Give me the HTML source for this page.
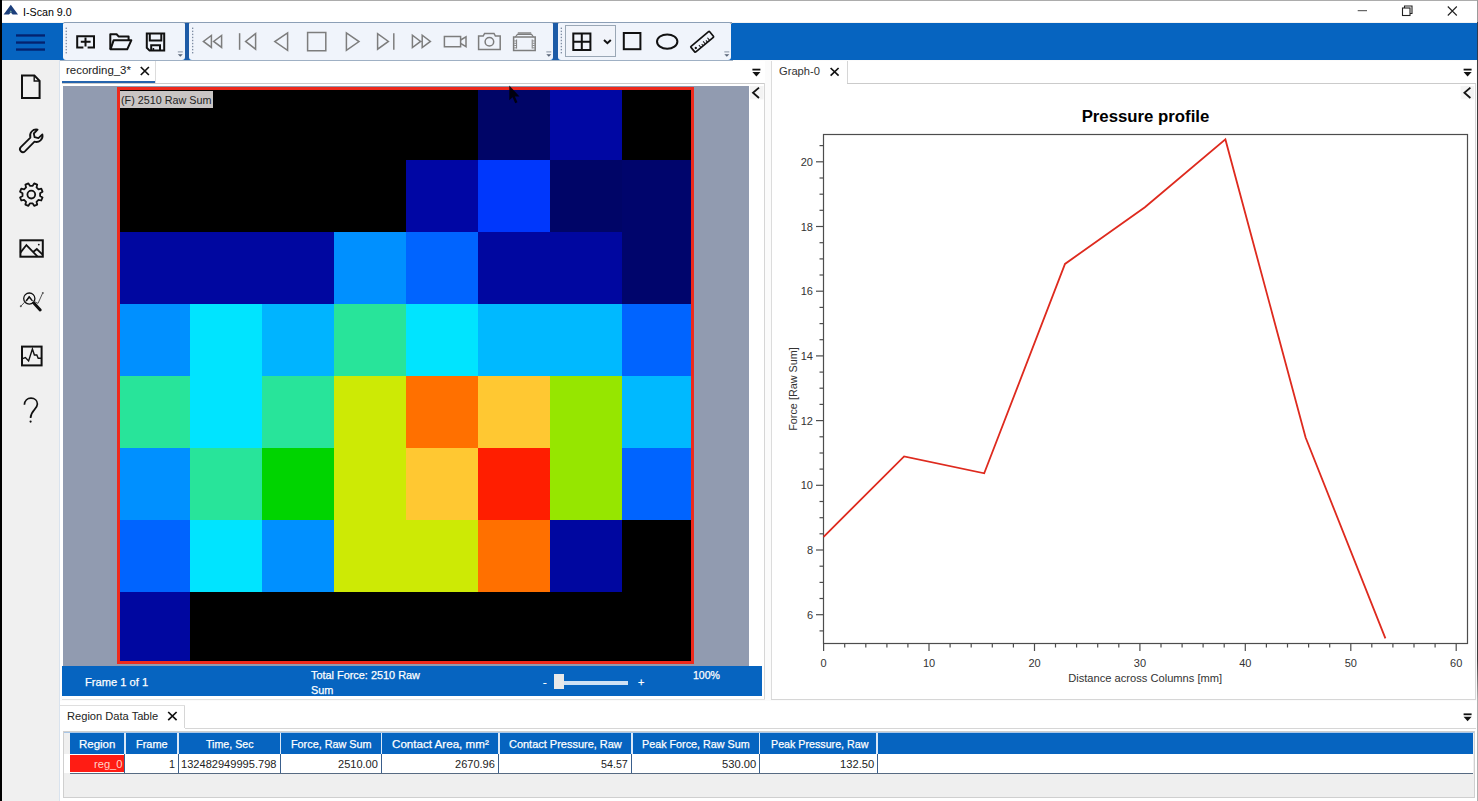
<!DOCTYPE html>
<html><head><meta charset="utf-8"><title>I-Scan 9.0</title>
<style>
html,body{margin:0;padding:0;}
body{width:1478px;height:801px;overflow:hidden;position:relative;background:#f3f3f3;font-family:"Liberation Sans",sans-serif;font-size:11.6px;color:#1a1a1a;}
.a{position:absolute;}
.t{position:absolute;white-space:nowrap;line-height:14px;transform:scaleX(.943);transform-origin:0 50%;}
.tr{transform-origin:100% 50%;text-align:right;}
.tc{transform-origin:50% 50%;text-align:center;}
.w{color:#fff;-webkit-text-stroke:0.25px #fff;}
svg{position:absolute;left:0;top:0;overflow:visible;}
.tk{font-family:"Liberation Sans",sans-serif;font-size:11px;fill:#333;}
.pan{position:absolute;top:22.4px;height:37.4px;background:#f0f4fb;border-radius:2px 2px 3px 3px;border-top:1.4px solid #8c9fb6;box-sizing:border-box;}
.hd{position:absolute;top:733px;height:21px;background:#0664c0;}
.hl{position:absolute;top:733px;height:21px;width:1.8px;background:#dbe8f7;}
.cl{position:absolute;top:754px;height:19px;width:1px;background:#3a5f8c;}
</style></head><body>

<!-- title bar -->
<div class="a" style="left:0;top:0;width:1478px;height:22px;background:#fff;"></div>
<div class="a" style="left:0;top:0;width:1478px;height:1.4px;background:#acacac;"></div>
<div class="t" style="left:22.6px;top:4.5px;color:#000;transform:scaleX(0.921)">I-Scan 9.0</div>

<!-- blue band -->
<div class="a" style="left:0;top:22.6px;width:1478px;height:37.8px;background:#0664c0;"></div>
<div class="a" style="left:64px;top:22.4px;width:668px;height:1.4px;background:#8c9fb6;"></div>
<div class="pan" style="left:63px;width:122px;"></div>
<div class="pan" style="left:189px;width:364px;"></div>
<div class="pan" style="left:558px;width:173px;"></div>
<div class="a" style="left:185px;top:23px;width:4px;height:37px;background:#1d5ba6;"></div>
<div class="a" style="left:553px;top:23px;width:5px;height:37px;background:#1d5ba6;"></div>
<div class="a" style="left:565px;top:25px;width:51px;height:32px;border:1px solid #9aa7b5;box-sizing:border-box;background:#f1f4fa;"></div>

<!-- sidebar -->
<div class="a" style="left:0;top:60px;width:59px;height:741px;background:#f0f0f0;"></div>
<div class="a" style="left:59px;top:60px;width:1px;height:741px;background:#d9e3ee;"></div>
<div class="a" style="left:60px;top:60px;width:1418px;height:741px;background:#fbfbfb;"></div>

<!-- left doc panel -->
<div class="a" style="left:60px;top:61px;width:705px;height:639px;background:#fff;"></div>
<div class="a" style="left:60px;top:60px;width:673px;height:1.4px;background:#9fb0c4;"></div>
<div class="a" style="left:62px;top:82.8px;width:703px;height:1.2px;background:#cbcbcb;"></div>
<div class="a" style="left:764px;top:83px;width:1px;height:617px;background:#d6d6d6;"></div>
<div class="a" style="left:62px;top:81px;width:93px;height:2px;background:#2463ac;"></div>
<div class="a" style="left:155px;top:61px;width:1px;height:22px;background:#dcdcdc;"></div>
<div class="t" style="left:66px;top:63px;transform:scaleX(0.988)">recording_3*</div>

<!-- heatmap area -->
<div class="a" style="left:63px;top:86px;width:686px;height:580px;background:#919bb0;"></div>
<div class="a" style="left:118px;top:88px;width:576px;height:576px;background:#000;"></div>
<svg width="1478" height="801" style="left:118px;top:88px;" shape-rendering="crispEdges"><rect x="360" y="0" width="72" height="72" fill="#000567"/><rect x="432" y="0" width="72" height="72" fill="#0007a3"/><rect x="288" y="72" width="72" height="72" fill="#0006a4"/><rect x="360" y="72" width="72" height="72" fill="#0037fc"/><rect x="432" y="72" width="72" height="72" fill="#000567"/><rect x="504" y="72" width="72" height="72" fill="#00056c"/><rect x="0" y="144" width="72" height="72" fill="#0007a0"/><rect x="72" y="144" width="72" height="72" fill="#0007a0"/><rect x="144" y="144" width="72" height="72" fill="#0007a0"/><rect x="216" y="144" width="72" height="72" fill="#0090ff"/><rect x="288" y="144" width="72" height="72" fill="#0064ff"/><rect x="360" y="144" width="72" height="72" fill="#0007a0"/><rect x="432" y="144" width="72" height="72" fill="#0007a0"/><rect x="504" y="144" width="72" height="72" fill="#00056c"/><rect x="0" y="216" width="72" height="72" fill="#0090ff"/><rect x="72" y="216" width="72" height="72" fill="#00e4ff"/><rect x="144" y="216" width="72" height="72" fill="#00b4ff"/><rect x="216" y="216" width="72" height="72" fill="#28e49a"/><rect x="288" y="216" width="72" height="72" fill="#00e4ff"/><rect x="360" y="216" width="72" height="72" fill="#00b9ff"/><rect x="432" y="216" width="72" height="72" fill="#00b9ff"/><rect x="504" y="216" width="72" height="72" fill="#0064ff"/><rect x="0" y="288" width="72" height="72" fill="#28e49a"/><rect x="72" y="288" width="72" height="72" fill="#00e4ff"/><rect x="144" y="288" width="72" height="72" fill="#28e49a"/><rect x="216" y="288" width="72" height="72" fill="#cdea05"/><rect x="288" y="288" width="72" height="72" fill="#ff7000"/><rect x="360" y="288" width="72" height="72" fill="#ffc832"/><rect x="432" y="288" width="72" height="72" fill="#96e600"/><rect x="504" y="288" width="72" height="72" fill="#00b9ff"/><rect x="0" y="360" width="72" height="72" fill="#0090ff"/><rect x="72" y="360" width="72" height="72" fill="#28e49a"/><rect x="144" y="360" width="72" height="72" fill="#00d400"/><rect x="216" y="360" width="72" height="72" fill="#cdea05"/><rect x="288" y="360" width="72" height="72" fill="#ffc832"/><rect x="360" y="360" width="72" height="72" fill="#ff1e00"/><rect x="432" y="360" width="72" height="72" fill="#96e600"/><rect x="504" y="360" width="72" height="72" fill="#0064ff"/><rect x="0" y="432" width="72" height="72" fill="#0064ff"/><rect x="72" y="432" width="72" height="72" fill="#00e4ff"/><rect x="144" y="432" width="72" height="72" fill="#0090ff"/><rect x="216" y="432" width="72" height="72" fill="#cdea05"/><rect x="288" y="432" width="72" height="72" fill="#cdea05"/><rect x="360" y="432" width="72" height="72" fill="#ff7000"/><rect x="432" y="432" width="72" height="72" fill="#0007a0"/><rect x="0" y="504" width="72" height="72" fill="#0007a0"/></svg>
<div class="a" style="left:117px;top:87.4px;width:577px;height:577px;border:solid #ee2a1c;border-width:3.2px 3.6px 3.8px 3px;box-sizing:border-box;"></div>
<div class="a" style="left:120px;top:91px;width:93px;height:16.8px;background:#c9c5c4;"></div>
<div class="t" style="left:121.4px;top:93.3px;color:#222;transform:scaleX(0.929)">(F) 2510 Raw Sum</div>

<!-- status bar -->
<div class="a" style="left:62px;top:665.8px;width:700.4px;height:30.5px;background:#0664c0;"></div>
<div class="t w" style="left:84.8px;top:675.3px;transform:scaleX(0.962)">Frame 1 of 1</div>
<div class="t w" style="left:311.2px;top:667.7px;transform:scaleX(0.939)">Total Force: 2510 Raw</div>
<div class="t w" style="left:311.2px;top:682.6px;transform:scaleX(0.939)">Sum</div>
<div class="t w" style="left:692.8px;top:667.5px;transform:scaleX(0.910)">100%</div>
<div class="t w" style="left:543px;top:675px;">-</div>
<div class="t w" style="left:637.5px;top:675px;">+</div>
<div class="a" style="left:562px;top:681px;width:66px;height:4px;background:#cfe1f4;"></div>
<div class="a" style="left:554px;top:674px;width:10px;height:15px;background:#e9e9e9;"></div>

<!-- right graph panel -->
<div class="a" style="left:771px;top:61px;width:705px;height:639px;background:#fff;"></div>
<div class="a" style="left:771px;top:61px;width:1px;height:639px;background:#dcdcdc;"></div>
<div class="a" style="left:1475px;top:83px;width:1px;height:617px;background:#d6d6d6;"></div>
<div class="a" style="left:771px;top:699px;width:705px;height:1px;background:#d6d6d6;"></div>
<div class="a" style="left:62px;top:699px;width:703px;height:1px;background:#e2e2e2;"></div>
<div class="a" style="left:847px;top:82.8px;width:629px;height:1.2px;background:#cbcbcb;"></div>
<div class="a" style="left:847px;top:61px;width:1px;height:22px;background:#d6d6d6;"></div>
<div class="t" style="left:779px;top:64.4px;color:#333;transform:scaleX(0.962)">Graph-0</div>

<!-- bottom panel -->
<div class="a" style="left:60px;top:701px;width:1418px;height:100px;background:#fff;"></div>
<div class="a" style="left:60px;top:728px;width:1418px;height:73px;background:#fff;"></div>
<div class="a" style="left:185px;top:728px;width:1291px;height:1px;background:#d6d6d6;"></div>
<div class="a" style="left:184px;top:706px;width:1px;height:22px;background:#d6d6d6;"></div>
<div class="a" style="left:60px;top:705px;width:125px;height:1px;background:#dfdfdf;"></div>
<div class="t" style="left:67.1px;top:709px;color:#222;transform:scaleX(0.958)">Region Data Table</div>

<!-- table -->
<div class="a" style="left:63px;top:731px;width:1412px;height:67px;background:#efefef;border:1px solid #cfcfcf;box-sizing:border-box;"></div>
<div class="a" style="left:64px;top:732px;width:1410px;height:1px;background:#a9c7e8;"></div>
<div class="hd" style="left:70.3px;width:1403px;"></div>
<div class="a" style="left:64px;top:754px;width:1409.4px;height:19px;background:#fff;"></div>
<div class="a" style="left:70px;top:772.8px;width:1403.4px;height:1.1px;background:#566a82;"></div>
<div class="a" style="left:70px;top:755px;width:55px;height:17px;background:#ff1c14;"></div>
<div class="hl" style="left:124.0px;"></div><div class="cl" style="left:124.4px;"></div><div class="hl" style="left:177.4px;"></div><div class="cl" style="left:177.8px;"></div><div class="hl" style="left:279.70000000000005px;"></div><div class="cl" style="left:280.1px;"></div><div class="hl" style="left:380.6px;"></div><div class="cl" style="left:381.0px;"></div><div class="hl" style="left:497.90000000000003px;"></div><div class="cl" style="left:498.3px;"></div><div class="hl" style="left:630.9px;"></div><div class="cl" style="left:631.3px;"></div><div class="hl" style="left:758.7px;"></div><div class="cl" style="left:759.1px;"></div><div class="hl" style="left:876.1px;"></div><div class="cl" style="left:876.5px;"></div><div class="t w" style="left:79.2px;top:736.7px;transform:scaleX(0.990)">Region</div><div class="t w" style="left:136.2px;top:736.7px;transform:scaleX(0.943)">Frame</div><div class="t w" style="left:205.7px;top:736.7px;transform:scaleX(0.917)">Time, Sec</div><div class="t w" style="left:290.8px;top:736.7px;transform:scaleX(0.933)">Force, Raw Sum</div><div class="t w" style="left:392.1px;top:736.7px;transform:scaleX(1.001)">Contact Area, mm²</div><div class="t w" style="left:508.8px;top:736.7px;transform:scaleX(0.946)">Contact Pressure, Raw</div><div class="t w" style="left:641.8px;top:736.7px;transform:scaleX(0.928)">Peak Force, Raw Sum</div><div class="t w" style="left:770.5px;top:736.7px;transform:scaleX(0.922)">Peak Pressure, Raw</div><div class="t" style="left:93.5px;top:757.3px;color:#ffd2c8;transform:scaleX(0.961)">reg_0</div><div class="t" style="left:168.9px;top:757.3px;color:#222;transform:scaleX(0.930)">1</div><div class="t" style="left:181.0px;top:757.3px;color:#222;transform:scaleX(0.955)">132482949995.798</div><div class="t" style="left:338.3px;top:757.3px;color:#222;transform:scaleX(0.952)">2510.00</div><div class="t" style="left:455.1px;top:757.3px;color:#222;transform:scaleX(0.952)">2670.96</div><div class="t" style="left:600.7px;top:757.3px;color:#222;transform:scaleX(0.923)">54.57</div><div class="t" style="left:722.0px;top:757.3px;color:#222;transform:scaleX(0.964)">530.00</div><div class="t" style="left:840.1px;top:757.3px;color:#222;transform:scaleX(0.964)">132.50</div>
<!-- chart -->
<svg width="1478" height="801"><rect x="823.5" y="134.5" width="644" height="509" fill="#fff" stroke="#4d4d4d" stroke-width="1.2"/><line x1="819.5" y1="630.9" x2="823.5" y2="630.9" stroke="#4d4d4d" stroke-width="1.2"/><line x1="816.0" y1="614.7" x2="823.5" y2="614.7" stroke="#4d4d4d" stroke-width="1.2"/><text x="813" y="618.7" text-anchor="end" class="tk">6</text><line x1="819.5" y1="598.5" x2="823.5" y2="598.5" stroke="#4d4d4d" stroke-width="1.2"/><line x1="819.5" y1="582.4" x2="823.5" y2="582.4" stroke="#4d4d4d" stroke-width="1.2"/><line x1="819.5" y1="566.2" x2="823.5" y2="566.2" stroke="#4d4d4d" stroke-width="1.2"/><line x1="816.0" y1="550.0" x2="823.5" y2="550.0" stroke="#4d4d4d" stroke-width="1.2"/><text x="813" y="554.0" text-anchor="end" class="tk">8</text><line x1="819.5" y1="533.8" x2="823.5" y2="533.8" stroke="#4d4d4d" stroke-width="1.2"/><line x1="819.5" y1="517.7" x2="823.5" y2="517.7" stroke="#4d4d4d" stroke-width="1.2"/><line x1="819.5" y1="501.5" x2="823.5" y2="501.5" stroke="#4d4d4d" stroke-width="1.2"/><line x1="816.0" y1="485.3" x2="823.5" y2="485.3" stroke="#4d4d4d" stroke-width="1.2"/><text x="813" y="489.3" text-anchor="end" class="tk">10</text><line x1="819.5" y1="469.1" x2="823.5" y2="469.1" stroke="#4d4d4d" stroke-width="1.2"/><line x1="819.5" y1="453.0" x2="823.5" y2="453.0" stroke="#4d4d4d" stroke-width="1.2"/><line x1="819.5" y1="436.8" x2="823.5" y2="436.8" stroke="#4d4d4d" stroke-width="1.2"/><line x1="816.0" y1="420.6" x2="823.5" y2="420.6" stroke="#4d4d4d" stroke-width="1.2"/><text x="813" y="424.6" text-anchor="end" class="tk">12</text><line x1="819.5" y1="404.4" x2="823.5" y2="404.4" stroke="#4d4d4d" stroke-width="1.2"/><line x1="819.5" y1="388.2" x2="823.5" y2="388.2" stroke="#4d4d4d" stroke-width="1.2"/><line x1="819.5" y1="372.1" x2="823.5" y2="372.1" stroke="#4d4d4d" stroke-width="1.2"/><line x1="816.0" y1="355.9" x2="823.5" y2="355.9" stroke="#4d4d4d" stroke-width="1.2"/><text x="813" y="359.9" text-anchor="end" class="tk">14</text><line x1="819.5" y1="339.7" x2="823.5" y2="339.7" stroke="#4d4d4d" stroke-width="1.2"/><line x1="819.5" y1="323.6" x2="823.5" y2="323.6" stroke="#4d4d4d" stroke-width="1.2"/><line x1="819.5" y1="307.4" x2="823.5" y2="307.4" stroke="#4d4d4d" stroke-width="1.2"/><line x1="816.0" y1="291.2" x2="823.5" y2="291.2" stroke="#4d4d4d" stroke-width="1.2"/><text x="813" y="295.2" text-anchor="end" class="tk">16</text><line x1="819.5" y1="275.0" x2="823.5" y2="275.0" stroke="#4d4d4d" stroke-width="1.2"/><line x1="819.5" y1="258.9" x2="823.5" y2="258.9" stroke="#4d4d4d" stroke-width="1.2"/><line x1="819.5" y1="242.7" x2="823.5" y2="242.7" stroke="#4d4d4d" stroke-width="1.2"/><line x1="816.0" y1="226.5" x2="823.5" y2="226.5" stroke="#4d4d4d" stroke-width="1.2"/><text x="813" y="230.5" text-anchor="end" class="tk">18</text><line x1="819.5" y1="210.3" x2="823.5" y2="210.3" stroke="#4d4d4d" stroke-width="1.2"/><line x1="819.5" y1="194.2" x2="823.5" y2="194.2" stroke="#4d4d4d" stroke-width="1.2"/><line x1="819.5" y1="178.0" x2="823.5" y2="178.0" stroke="#4d4d4d" stroke-width="1.2"/><line x1="816.0" y1="161.8" x2="823.5" y2="161.8" stroke="#4d4d4d" stroke-width="1.2"/><text x="813" y="165.8" text-anchor="end" class="tk">20</text><line x1="819.5" y1="145.6" x2="823.5" y2="145.6" stroke="#4d4d4d" stroke-width="1.2"/><line x1="823.6" y1="643.5" x2="823.6" y2="651.0" stroke="#4d4d4d" stroke-width="1.2"/><text x="823.6" y="667" text-anchor="middle" class="tk">0</text><line x1="844.7" y1="643.5" x2="844.7" y2="647.5" stroke="#4d4d4d" stroke-width="1.2"/><line x1="865.8" y1="643.5" x2="865.8" y2="647.5" stroke="#4d4d4d" stroke-width="1.2"/><line x1="886.9" y1="643.5" x2="886.9" y2="647.5" stroke="#4d4d4d" stroke-width="1.2"/><line x1="907.9" y1="643.5" x2="907.9" y2="647.5" stroke="#4d4d4d" stroke-width="1.2"/><line x1="929.0" y1="643.5" x2="929.0" y2="651.0" stroke="#4d4d4d" stroke-width="1.2"/><text x="929.0" y="667" text-anchor="middle" class="tk">10</text><line x1="950.1" y1="643.5" x2="950.1" y2="647.5" stroke="#4d4d4d" stroke-width="1.2"/><line x1="971.2" y1="643.5" x2="971.2" y2="647.5" stroke="#4d4d4d" stroke-width="1.2"/><line x1="992.3" y1="643.5" x2="992.3" y2="647.5" stroke="#4d4d4d" stroke-width="1.2"/><line x1="1013.4" y1="643.5" x2="1013.4" y2="647.5" stroke="#4d4d4d" stroke-width="1.2"/><line x1="1034.5" y1="643.5" x2="1034.5" y2="651.0" stroke="#4d4d4d" stroke-width="1.2"/><text x="1034.5" y="667" text-anchor="middle" class="tk">20</text><line x1="1055.5" y1="643.5" x2="1055.5" y2="647.5" stroke="#4d4d4d" stroke-width="1.2"/><line x1="1076.6" y1="643.5" x2="1076.6" y2="647.5" stroke="#4d4d4d" stroke-width="1.2"/><line x1="1097.7" y1="643.5" x2="1097.7" y2="647.5" stroke="#4d4d4d" stroke-width="1.2"/><line x1="1118.8" y1="643.5" x2="1118.8" y2="647.5" stroke="#4d4d4d" stroke-width="1.2"/><line x1="1139.9" y1="643.5" x2="1139.9" y2="651.0" stroke="#4d4d4d" stroke-width="1.2"/><text x="1139.9" y="667" text-anchor="middle" class="tk">30</text><line x1="1161.0" y1="643.5" x2="1161.0" y2="647.5" stroke="#4d4d4d" stroke-width="1.2"/><line x1="1182.1" y1="643.5" x2="1182.1" y2="647.5" stroke="#4d4d4d" stroke-width="1.2"/><line x1="1203.1" y1="643.5" x2="1203.1" y2="647.5" stroke="#4d4d4d" stroke-width="1.2"/><line x1="1224.2" y1="643.5" x2="1224.2" y2="647.5" stroke="#4d4d4d" stroke-width="1.2"/><line x1="1245.3" y1="643.5" x2="1245.3" y2="651.0" stroke="#4d4d4d" stroke-width="1.2"/><text x="1245.3" y="667" text-anchor="middle" class="tk">40</text><line x1="1266.4" y1="643.5" x2="1266.4" y2="647.5" stroke="#4d4d4d" stroke-width="1.2"/><line x1="1287.5" y1="643.5" x2="1287.5" y2="647.5" stroke="#4d4d4d" stroke-width="1.2"/><line x1="1308.6" y1="643.5" x2="1308.6" y2="647.5" stroke="#4d4d4d" stroke-width="1.2"/><line x1="1329.7" y1="643.5" x2="1329.7" y2="647.5" stroke="#4d4d4d" stroke-width="1.2"/><line x1="1350.8" y1="643.5" x2="1350.8" y2="651.0" stroke="#4d4d4d" stroke-width="1.2"/><text x="1350.8" y="667" text-anchor="middle" class="tk">50</text><line x1="1371.8" y1="643.5" x2="1371.8" y2="647.5" stroke="#4d4d4d" stroke-width="1.2"/><line x1="1392.9" y1="643.5" x2="1392.9" y2="647.5" stroke="#4d4d4d" stroke-width="1.2"/><line x1="1414.0" y1="643.5" x2="1414.0" y2="647.5" stroke="#4d4d4d" stroke-width="1.2"/><line x1="1435.1" y1="643.5" x2="1435.1" y2="647.5" stroke="#4d4d4d" stroke-width="1.2"/><line x1="1456.2" y1="643.5" x2="1456.2" y2="651.0" stroke="#4d4d4d" stroke-width="1.2"/><text x="1456.2" y="667" text-anchor="middle" class="tk">60</text><polyline fill="none" stroke="#de2a1e" stroke-width="1.8" stroke-linejoin="miter" points="823.6,536.8 904.1,456.4 984.2,473.3 1065,263.9 1144.9,207.3 1225.4,139.4 1305.6,437.5 1385.4,638.4"/>
<text x="1145.5" y="122.3" text-anchor="middle" style="font-family:'Liberation Sans',sans-serif;font-weight:700;font-size:15.6px;fill:#000" textLength="127.7" lengthAdjust="spacingAndGlyphs">Pressure profile</text>
<text x="1145.2" y="682.3" text-anchor="middle" style="font-family:'Liberation Sans',sans-serif;font-size:11px;fill:#333" textLength="154" lengthAdjust="spacingAndGlyphs">Distance across Columns [mm]</text>
<text transform="translate(797.3,389) rotate(-90)" text-anchor="middle" style="font-family:'Liberation Sans',sans-serif;font-size:11px;fill:#333" textLength="83.5" lengthAdjust="spacingAndGlyphs">Force [Raw Sum]</text>
</svg>

<svg width="1478" height="801"><path d="M10.8,4.8 L18,14.5 L12.6,14.5 L10.8,12.4 L9,14.5 L3.6,14.5 Z" fill="#1c3f7c"/><path d="M10.8,10.2 L12.2,12.8 L10.8,12 L9.4,12.8 Z" fill="#6fa596"/><rect x="16" y="34.3" width="29" height="2.3" fill="#04226e"/><rect x="16" y="41.4" width="29" height="2.3" fill="#04226e"/><rect x="16" y="48.4" width="29" height="2.3" fill="#04226e"/><path d="M1357.7,10.7 H1367" stroke="#444" stroke-width="1" fill="none"/><rect x="1402.5" y="8" width="7.5" height="7.5" fill="none" stroke="#222" stroke-width="1.1"/><path d="M1404.5,8 V6 H1412 V13.5 H1410" fill="none" stroke="#222" stroke-width="1.1"/><path d="M1447.8,6.5 L1456.8,15.5 M1456.8,6.5 L1447.8,15.5" stroke="#222" stroke-width="1.1" fill="none"/><rect x="65.60000000000001" y="27.60" width="1.3" height="1.4" fill="#7f8da3"/><rect x="65.60000000000001" y="30.65" width="1.3" height="1.4" fill="#7f8da3"/><rect x="65.60000000000001" y="33.70" width="1.3" height="1.4" fill="#7f8da3"/><rect x="65.60000000000001" y="36.75" width="1.3" height="1.4" fill="#7f8da3"/><rect x="65.60000000000001" y="39.80" width="1.3" height="1.4" fill="#7f8da3"/><rect x="65.60000000000001" y="42.85" width="1.3" height="1.4" fill="#7f8da3"/><rect x="65.60000000000001" y="45.90" width="1.3" height="1.4" fill="#7f8da3"/><rect x="65.60000000000001" y="48.95" width="1.3" height="1.4" fill="#7f8da3"/><rect x="65.60000000000001" y="52.00" width="1.3" height="1.4" fill="#7f8da3"/><rect x="192.0" y="27.60" width="1.3" height="1.4" fill="#7f8da3"/><rect x="192.0" y="30.65" width="1.3" height="1.4" fill="#7f8da3"/><rect x="192.0" y="33.70" width="1.3" height="1.4" fill="#7f8da3"/><rect x="192.0" y="36.75" width="1.3" height="1.4" fill="#7f8da3"/><rect x="192.0" y="39.80" width="1.3" height="1.4" fill="#7f8da3"/><rect x="192.0" y="42.85" width="1.3" height="1.4" fill="#7f8da3"/><rect x="192.0" y="45.90" width="1.3" height="1.4" fill="#7f8da3"/><rect x="192.0" y="48.95" width="1.3" height="1.4" fill="#7f8da3"/><rect x="192.0" y="52.00" width="1.3" height="1.4" fill="#7f8da3"/><rect x="560.6999999999999" y="27.60" width="1.3" height="1.4" fill="#7f8da3"/><rect x="560.6999999999999" y="30.65" width="1.3" height="1.4" fill="#7f8da3"/><rect x="560.6999999999999" y="33.70" width="1.3" height="1.4" fill="#7f8da3"/><rect x="560.6999999999999" y="36.75" width="1.3" height="1.4" fill="#7f8da3"/><rect x="560.6999999999999" y="39.80" width="1.3" height="1.4" fill="#7f8da3"/><rect x="560.6999999999999" y="42.85" width="1.3" height="1.4" fill="#7f8da3"/><rect x="560.6999999999999" y="45.90" width="1.3" height="1.4" fill="#7f8da3"/><rect x="560.6999999999999" y="48.95" width="1.3" height="1.4" fill="#7f8da3"/><rect x="560.6999999999999" y="52.00" width="1.3" height="1.4" fill="#7f8da3"/><rect x="177.8" y="51.4" width="5" height="1" fill="#8792a2"/><path d="M177.8,54.2 h5 l-2.5,2.6z" fill="#596577"/><rect x="546.3" y="51.4" width="5" height="1" fill="#8792a2"/><path d="M546.3,54.2 h5 l-2.5,2.6z" fill="#596577"/><rect x="724.3" y="51.4" width="5" height="1" fill="#8792a2"/><path d="M724.3,54.2 h5 l-2.5,2.6z" fill="#596577"/><path d="M83.4,47.5 H77.2 V36.2 H94 V47.5 H87.6" fill="none" stroke="#111" stroke-width="2"/><path d="M80.8,41.8 H90.6 M85.5,37.4 V46.4" fill="none" stroke="#111" stroke-width="2"/><path d="M110.3,49.2 V34.3 H116.6 L118.8,36.6 H128.6 V40" fill="none" stroke="#111" stroke-width="2" stroke-linejoin="round"/><path d="M110.5,49.3 L113.6,40.3 H131.3 L127.2,49.3 Z" fill="none" stroke="#111" stroke-width="2" stroke-linejoin="round"/><path d="M146.8,33.6 H164.2 V50.6 H149.6 L146.8,47.8 Z" fill="none" stroke="#111" stroke-width="2" stroke-linejoin="miter"/><path d="M149.8,33.6 V40.4 H161.3 V33.6" fill="none" stroke="#111" stroke-width="2"/><path d="M151.2,50.6 V45.3 H160 V50.6" fill="none" stroke="#111" stroke-width="2"/><path d="M153.4,50.6 V48" fill="none" stroke="#111" stroke-width="1.6"/><path d="M211.4,35.4 V47.4 L203.4,41.4 Z M221.6,35.4 V47.4 L213.6,41.4 Z" fill="none" stroke="#7d7d7d" stroke-width="1.5" stroke-linejoin="miter"/><path d="M239.6,33.2 V49.8" fill="none" stroke="#7d7d7d" stroke-width="1.5" stroke-linejoin="miter"/><path d="M255.6,33.6 V49.2 L245.6,41.4 Z" fill="none" stroke="#7d7d7d" stroke-width="1.5" stroke-linejoin="miter"/><path d="M287.6,33 V50.4 L274.8,41.6 Z" fill="none" stroke="#7d7d7d" stroke-width="1.5" stroke-linejoin="miter"/><path d="M307.6,32.6 H325.8 V50.8 H307.6 Z" fill="none" stroke="#7d7d7d" stroke-width="1.5" stroke-linejoin="miter"/><path d="M346.4,33 V50.4 L359,41.6 Z" fill="none" stroke="#7d7d7d" stroke-width="1.5" stroke-linejoin="miter"/><path d="M377.6,33.6 V49.2 L388.4,41.4 Z" fill="none" stroke="#7d7d7d" stroke-width="1.5" stroke-linejoin="miter"/><path d="M393.8,33.2 V49.8" fill="none" stroke="#7d7d7d" stroke-width="1.5" stroke-linejoin="miter"/><path d="M412.4,35.2 V47.6 L420.6,41.4 Z M422.2,35.2 V47.6 L430.4,41.4 Z" fill="none" stroke="#7d7d7d" stroke-width="1.5" stroke-linejoin="miter"/><path d="M444.4,36.6 H460.6 V46.8 H444.4 Z" fill="none" stroke="#7d7d7d" stroke-width="1.5" stroke-linejoin="miter"/><path d="M460.6,40 L466,36.8 V46.6 L460.6,43.4" fill="none" stroke="#7d7d7d" stroke-width="1.5" stroke-linejoin="miter"/><path d="M478.6,36 H483.2 L484.6,33.4 H494 L495.4,36 H500.2 V49.6 H478.6 Z" fill="none" stroke="#7d7d7d" stroke-width="1.5" stroke-linejoin="miter"/><circle cx="489.4" cy="41.8" r="4.3" fill="none" stroke="#7d7d7d" stroke-width="1.5"/><path d="M513.6,37 H535.2 V50.6 H513.6 Z" fill="none" stroke="#7d7d7d" stroke-width="1.5" stroke-linejoin="miter"/><path d="M515.4,37 L517.4,34.4 H531.6 L533.4,37" fill="none" stroke="#7d7d7d" stroke-width="1.2" stroke-linejoin="miter"/><path d="M517.8,33 H531.2" fill="none" stroke="#7d7d7d" stroke-width="1.4" stroke-linejoin="miter"/><path d="M516.6,39.5 V48.6 M532.2,39.5 V48.6" fill="none" stroke="#7d7d7d" stroke-width="1" stroke-linejoin="miter"/><rect x="514.2" y="40.5" width="2" height="0.9" fill="#7d7d7d"/><rect x="532.6" y="40.5" width="2" height="0.9" fill="#7d7d7d"/><rect x="514.2" y="42.8" width="2" height="0.9" fill="#7d7d7d"/><rect x="532.6" y="42.8" width="2" height="0.9" fill="#7d7d7d"/><rect x="514.2" y="45.1" width="2" height="0.9" fill="#7d7d7d"/><rect x="532.6" y="45.1" width="2" height="0.9" fill="#7d7d7d"/><rect x="514.2" y="47.4" width="2" height="0.9" fill="#7d7d7d"/><rect x="532.6" y="47.4" width="2" height="0.9" fill="#7d7d7d"/><path d="M573.3,33.4 H590.4 V50 H573.3 Z M581.8,33.4 V50 M573.3,41.7 H590.4" fill="none" stroke="#111" stroke-width="2"/><path d="M604,40 L607.4,43.2 L610.8,40" fill="none" stroke="#111" stroke-width="2"/><rect x="623.8" y="33" width="16.6" height="16.2" fill="none" stroke="#111" stroke-width="2"/><ellipse cx="667.2" cy="41.6" rx="10.2" ry="7.2" fill="none" stroke="#111" stroke-width="2"/><g transform="translate(702.2,41.8) rotate(-40)"><rect x="-12.2" y="-3.7" width="24.4" height="7.4" rx="0.8" fill="none" stroke="#111" stroke-width="1.7"/><path d="M-4.6,3.7 v-3.4" stroke="#111" stroke-width="1"/><path d="M-1.8,3.7 v-2.4" stroke="#111" stroke-width="1"/><path d="M1,3.7 v-3.4" stroke="#111" stroke-width="1"/><path d="M3.8,3.7 v-2.4" stroke="#111" stroke-width="1"/><path d="M6.6,3.7 v-3.4" stroke="#111" stroke-width="1"/><circle cx="-8.8" cy="0.6" r="1.2" fill="#111"/></g><path d="M22,75.6 H34.4 L39.6,80.8 V98 H22 Z" fill="none" stroke="#111" stroke-width="2" stroke-linejoin="miter"/><path d="M34.2,75.8 V81 H39.4" fill="none" stroke="#111" stroke-width="1.4"/><path d="M37.6,129.6 A6.2,6.2 0 0 0 30.4,137.6 L20.8,147.2 A2.9,2.9 0 0 0 24.9,151.3 L34.5,141.7 A6.2,6.2 0 0 0 42.4,134.4 L38.4,138.2 L34.6,137.2 L33.8,133.5 Z" fill="none" stroke="#111" stroke-width="1.8" stroke-linejoin="round"/><path d="M40.09,195.99 L42.54,197.48 L41.28,200.50 L38.50,199.83 L36.53,201.80 L37.20,204.58 L34.18,205.84 L32.69,203.39 L29.91,203.39 L28.42,205.84 L25.40,204.58 L26.07,201.80 L24.10,199.83 L21.32,200.50 L20.06,197.48 L22.51,195.99 L22.51,193.21 L20.06,191.72 L21.32,188.70 L24.10,189.37 L26.07,187.40 L25.40,184.62 L28.42,183.36 L29.91,185.81 L32.69,185.81 L34.18,183.36 L37.20,184.62 L36.53,187.40 L38.50,189.37 L41.28,188.70 L42.54,191.72 L40.09,193.21Z" fill="none" stroke="#111" stroke-width="1.8" stroke-linejoin="round"/><circle cx="31.3" cy="194.6" r="3.9" fill="none" stroke="#111" stroke-width="1.8"/><rect x="20.4" y="240.3" width="22.4" height="16.4" fill="none" stroke="#111" stroke-width="2"/><path d="M20.4,252.6 L26.4,245 L37.6,256.6 M33.2,252 L36.8,249 L42.6,254.6" fill="none" stroke="#111" stroke-width="1.8"/><circle cx="38.8" cy="244.6" r="0.9" fill="#111"/><circle cx="29.3" cy="298.6" r="5.6" fill="none" stroke="#111" stroke-width="1.3"/><path d="M33.6,302.8 L40.2,310" stroke="#111" stroke-width="3" stroke-linecap="round"/><path d="M20.8,306.2 L26.2,300.6 L29.2,296.4 L32.2,300.4 L38,303.4 L42.6,293.2" fill="none" stroke="#555" stroke-width="1"/><path d="M26.2,301 L29.2,297 L32.2,300.6" fill="none" stroke="#111" stroke-width="1.4"/><circle cx="20.8" cy="306.2" r="1" fill="#555"/><circle cx="42.8" cy="293" r="1" fill="#555"/><rect x="22" y="346.6" width="19.6" height="18.8" fill="none" stroke="#111" stroke-width="2"/><path d="M22,358.8 L25.4,357.6 L28.6,361 L32.4,349 L34.4,355 L36.8,355 L38.2,358.2 L41.6,358.2" fill="none" stroke="#111" stroke-width="1.4" stroke-linejoin="miter"/><path d="M24.4,404.8 C24.6,400.4 27.6,398.2 31,398.2 C34.6,398.2 37.4,400.6 37.4,404 C37.4,409.4 30.6,410.2 30.6,418" fill="none" stroke="#111" stroke-width="1.7"/><circle cx="30.6" cy="421.6" r="1.1" fill="#111"/><path d="M140.8,67 L148.9,75 M148.9,67 L140.8,75" stroke="#111" stroke-width="1.7" fill="none"/><path d="M830.6,68 L838.6,75.6 M838.6,68 L830.6,75.6" stroke="#111" stroke-width="1.7" fill="none"/><path d="M168.2,712 L176.6,720.2 M176.6,712 L168.2,720.2" stroke="#111" stroke-width="1.7" fill="none"/><rect x="752.4" y="68.7" width="8" height="1.8" fill="#111"/><path d="M752.4,72.10000000000001 h8 l-4,4.4z" fill="#111"/><rect x="1463.6" y="68.7" width="8" height="1.8" fill="#111"/><path d="M1463.6,72.10000000000001 h8 l-4,4.4z" fill="#111"/><rect x="1463.6" y="713.4" width="8" height="1.8" fill="#111"/><path d="M1463.6,716.8 h8 l-4,4.4z" fill="#111"/><rect x="750" y="86" width="13.6" height="13.4" fill="#f3f3f3"/><rect x="1460.6" y="86" width="13.6" height="13.4" fill="#f3f3f3"/><path d="M759,87.6 L753,92.8 L759,98.0" fill="none" stroke="#111" stroke-width="1.8"/><path d="M1470.4,87.6 L1464.4,92.8 L1470.4,98.0" fill="none" stroke="#111" stroke-width="1.8"/><path d="M509.3,85.6 v14.6 l3.3,-3 l2.6,6 l2.3,-1 l-2.6,-5.8 h4.6 Z" fill="#000" opacity="0.85"/></svg>

<div class="a" style="left:1476.6px;top:0;width:1.4px;height:22px;background:#9a9a9a;"></div><div class="a" style="left:1476.6px;top:22px;width:1.4px;height:40px;background:#2b3a4e;"></div><div class="a" style="left:1476.7px;top:60px;width:1.3px;height:600px;background:#3c3c3c;"></div><div class="a" style="left:1476.7px;top:660px;width:1.3px;height:141px;background:linear-gradient(#3c3c3c,#b0b0b0 40px);"></div>
<!-- left black strip -->
<div class="a" style="left:0;top:0;width:1.9px;height:801px;background:#000;"></div>
</body></html>
